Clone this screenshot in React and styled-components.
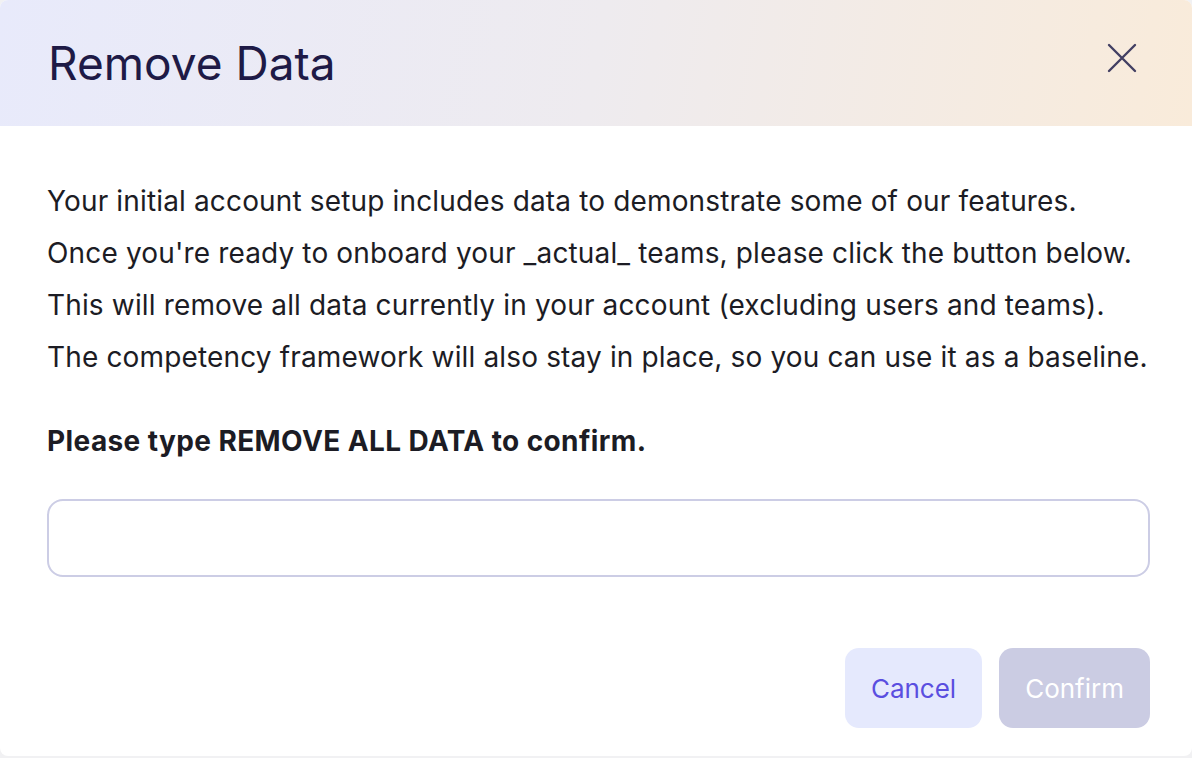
import React from "react";
import styled, { createGlobalStyle } from "styled-components";

const GlobalStyle = createGlobalStyle`
  html, body {
    margin: 0;
    padding: 0;
    background: #f1f1f3;
  }
  * {
    box-sizing: border-box;
  }
`;

const Modal = styled.div`
  width: 1192px;
  height: 756px;
  background: #ffffff;
  border-radius: 8px;
  overflow: hidden;
  display: flex;
  flex-direction: column;
  font-family: "Inter", "Noto Sans", sans-serif;
`;

const Header = styled.div`
  height: 126px;
  flex-shrink: 0;
  padding: 0 48px;
  display: flex;
  align-items: center;
  justify-content: space-between;
  background: linear-gradient(100deg, #e8eafb 0%, #eeebef 50%, #f9ebda 100%);
`;

const Title = styled.h1`
  margin: 0;
  font-size: 46px;
  font-weight: 400;
  color: #1e1a46;
`;

const CloseButton = styled.button`
  border: none;
  background: none;
  padding: 0;
  margin: 0 7px 10px 0;
  width: 30px;
  height: 30px;
  display: flex;
  align-items: center;
  justify-content: center;
  cursor: pointer;
`;

const Body = styled.div`
  padding: 49px 42px 0 47px;
  flex: 1;
  display: flex;
  flex-direction: column;
`;

const Text = styled.p`
  margin: 0;
  font-size: 28px;
  line-height: 52px;
  letter-spacing: 0.15px;
  color: #1c1c24;
  white-space: nowrap;
`;

const Label = styled.p`
  margin: 32px 0 0;
  font-size: 28px;
  line-height: 52px;
  letter-spacing: 0.4px;
  font-weight: 700;
  color: #1c1c24;
`;

const Input = styled.input`
  margin-top: 32px;
  width: 100%;
  height: 78px;
  border: 2px solid #cccde5;
  border-radius: 16px;
  font-size: 26px;
  padding: 0 22px;
  font-family: inherit;
  outline: none;
`;

const Footer = styled.div`
  margin-top: 71px;
  display: flex;
  justify-content: flex-end;
  gap: 17px;
`;

const Button = styled.button`
  height: 80px;
  padding: 0 26px;
  border: none;
  border-radius: 14px;
  font-family: inherit;
  font-size: 26px;
  background: ${(p) => (p.primary ? "#cbcce3" : "#e5e9fd")};
  color: ${(p) => (p.primary ? "#ffffff" : "#5a4ee0")};
  cursor: ${(p) => (p.primary ? "default" : "pointer")};
`;

const App = () => (
  <>
    <GlobalStyle />
    <Modal>
      <Header>
        <Title>Remove Data</Title>
        <CloseButton aria-label="Close">
          <svg width="30" height="30" viewBox="0 0 30 30" fill="none">
            <path
              d="M2 2 L28 28 M28 2 L2 28"
              stroke="#423f62"
              strokeWidth="2.4"
              strokeLinecap="round"
            />
          </svg>
        </CloseButton>
      </Header>
      <Body>
        <Text>Your initial account setup includes data to demonstrate some of our features.</Text>
        <Text>Once you're ready to onboard your _actual_ teams, please click the button below.</Text>
        <Text>This will remove all data currently in your account (excluding users and teams).</Text>
        <Text>The competency framework will also stay in place, so you can use it as a baseline.</Text>
        <Label>Please type REMOVE ALL DATA to confirm.</Label>
        <Input type="text" />
        <Footer>
          <Button>Cancel</Button>
          <Button primary disabled>
            Confirm
          </Button>
        </Footer>
      </Body>
    </Modal>
  </>
);

export default App;
